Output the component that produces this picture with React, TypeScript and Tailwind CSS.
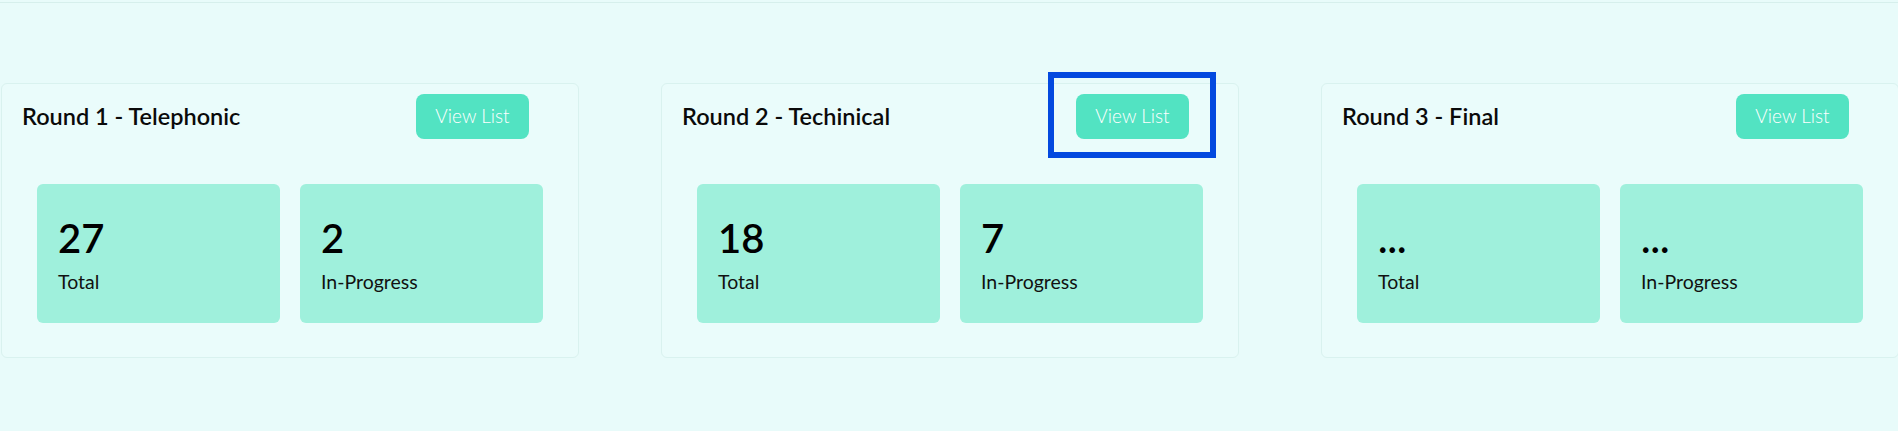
import React from 'react';

const ROUNDS = [
  { title: 'Round 1 - Telephonic', total: '27', progress: '2' },
  { title: 'Round 2 - Techinical', total: '18', progress: '7', highlight: true },
  { title: 'Round 3 - Final', total: '...', progress: '...' },
];

function StatBox({ value, label }: { value: string; label: string }) {
  return (
    <div className="w-[244px] h-[139px] rounded-[6px] bg-[#9ff0dc] pl-[21px] pt-[32px]">
      <div className="text-[40px] leading-[44px] font-semibold text-black">{value}</div>
      <div className="mt-[10px] text-[19.5px] leading-[24px] text-[#111]">{label}</div>
    </div>
  );
}

function RoundCard({
  title,
  total,
  progress,
  highlight,
}: {
  title: string;
  total: string;
  progress: string;
  highlight?: boolean;
}) {
  return (
    <div className="w-[578px] shrink-0 rounded-[6px] border border-[#d9f2ef] bg-[#eafcfb]">
      <div className="flex items-center justify-between pl-[20px] pr-[49px] pt-[10px]">
        <h2 className="text-[23.5px] font-semibold text-[#0a0a0a]">{title}</h2>
        <div className="relative">
          <button
            type="button"
            className="w-[113px] h-[45px] rounded-[8px] bg-[#52e3c2] text-white text-[19px] font-light"
          >
            View List
          </button>
          {highlight && (
            <div className="absolute -left-[28px] -top-[22px] w-[168px] h-[86px] border-[6px] border-[#0349df]" />
          )}
        </div>
      </div>
      <div className="flex gap-[20px] px-[35px] pt-[45px] pb-[34px]">
        <StatBox value={total} label="Total" />
        <StatBox value={progress} label="In-Progress" />
      </div>
    </div>
  );
}

export default function App() {
  return (
    <div
      className="w-[1898px] h-[431px] overflow-hidden bg-[#e8fbfa] pt-[2px]"
      style={{ fontFamily: 'Lato, "Noto Sans", sans-serif' }}
    >
      <div className="border-t border-[#d6efec] pt-[80px] pl-[1px]">
        <div className="flex gap-[82px]">
          {ROUNDS.map((r) => (
            <RoundCard key={r.title} {...r} />
          ))}
        </div>
      </div>
    </div>
  );
}
